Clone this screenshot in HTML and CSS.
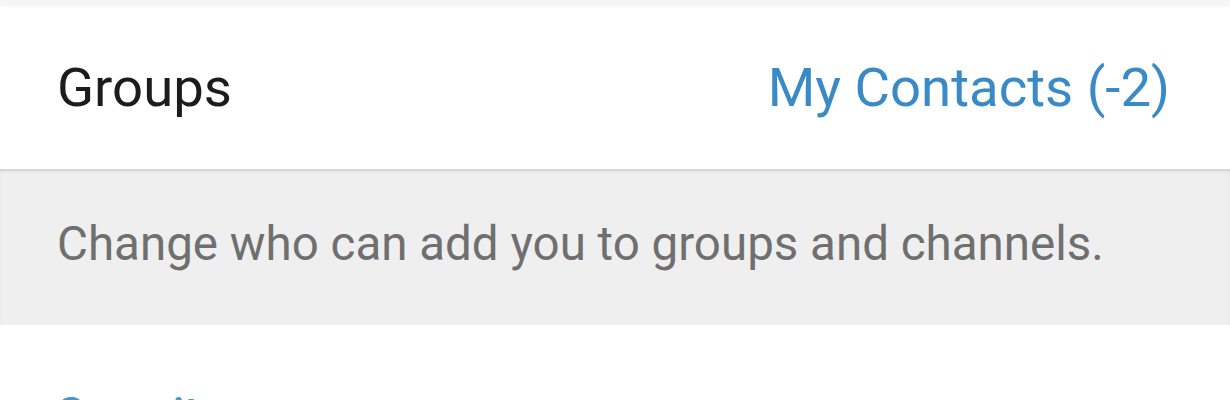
FILE: index.html
```html
<!DOCTYPE html>
<html lang="en">
<head>
    <meta charset="UTF-8">
    <title>Privacy and Security</title>
    <link rel="stylesheet" href="styles.css">
</head>
<body>
    <div class="top-strip"></div>

    <div class="row">
        <span class="row-title">Groups</span>
        <span class="row-value">My Contacts (-2)</span>
    </div>

    <div class="info">
        <p>Change who can add you to groups and channels.</p>
    </div>

    <div class="section">
        <h2>Security</h2>
    </div>
</body>
</html>
```

FILE: styles.css
```css
html, body { margin: 0; padding: 0; }
body { font-family: Roboto, "Liberation Sans", sans-serif; background-color: #fff; height: 400px; overflow: hidden; }
.top-strip { height: 5px; background-color: #f6f6f6; box-shadow: 0 1px 3px rgba(0,0,0,0.06); }
.row { height: 164px; display: flex; align-items: center; justify-content: space-between; padding: 0 60px 0 57px; font-size: 54.5px; }
.row-title { color: #1c1c1c; }
.row-value { color: #3a8ac7; }
.info { height: 156px; background-color: #efefef; box-shadow: inset 0 3px 3px -1px rgba(0,0,0,0.13); display: flex; align-items: center; padding: 0 57px; }
.info p { margin: 0 0 6px; color: #6f6f6f; font-size: 47.5px; }
.section { padding: 62px 57px 0; }
.section h2 { margin: 0; font-size: 45px; font-weight: 500; color: #4a94d0; }
```
